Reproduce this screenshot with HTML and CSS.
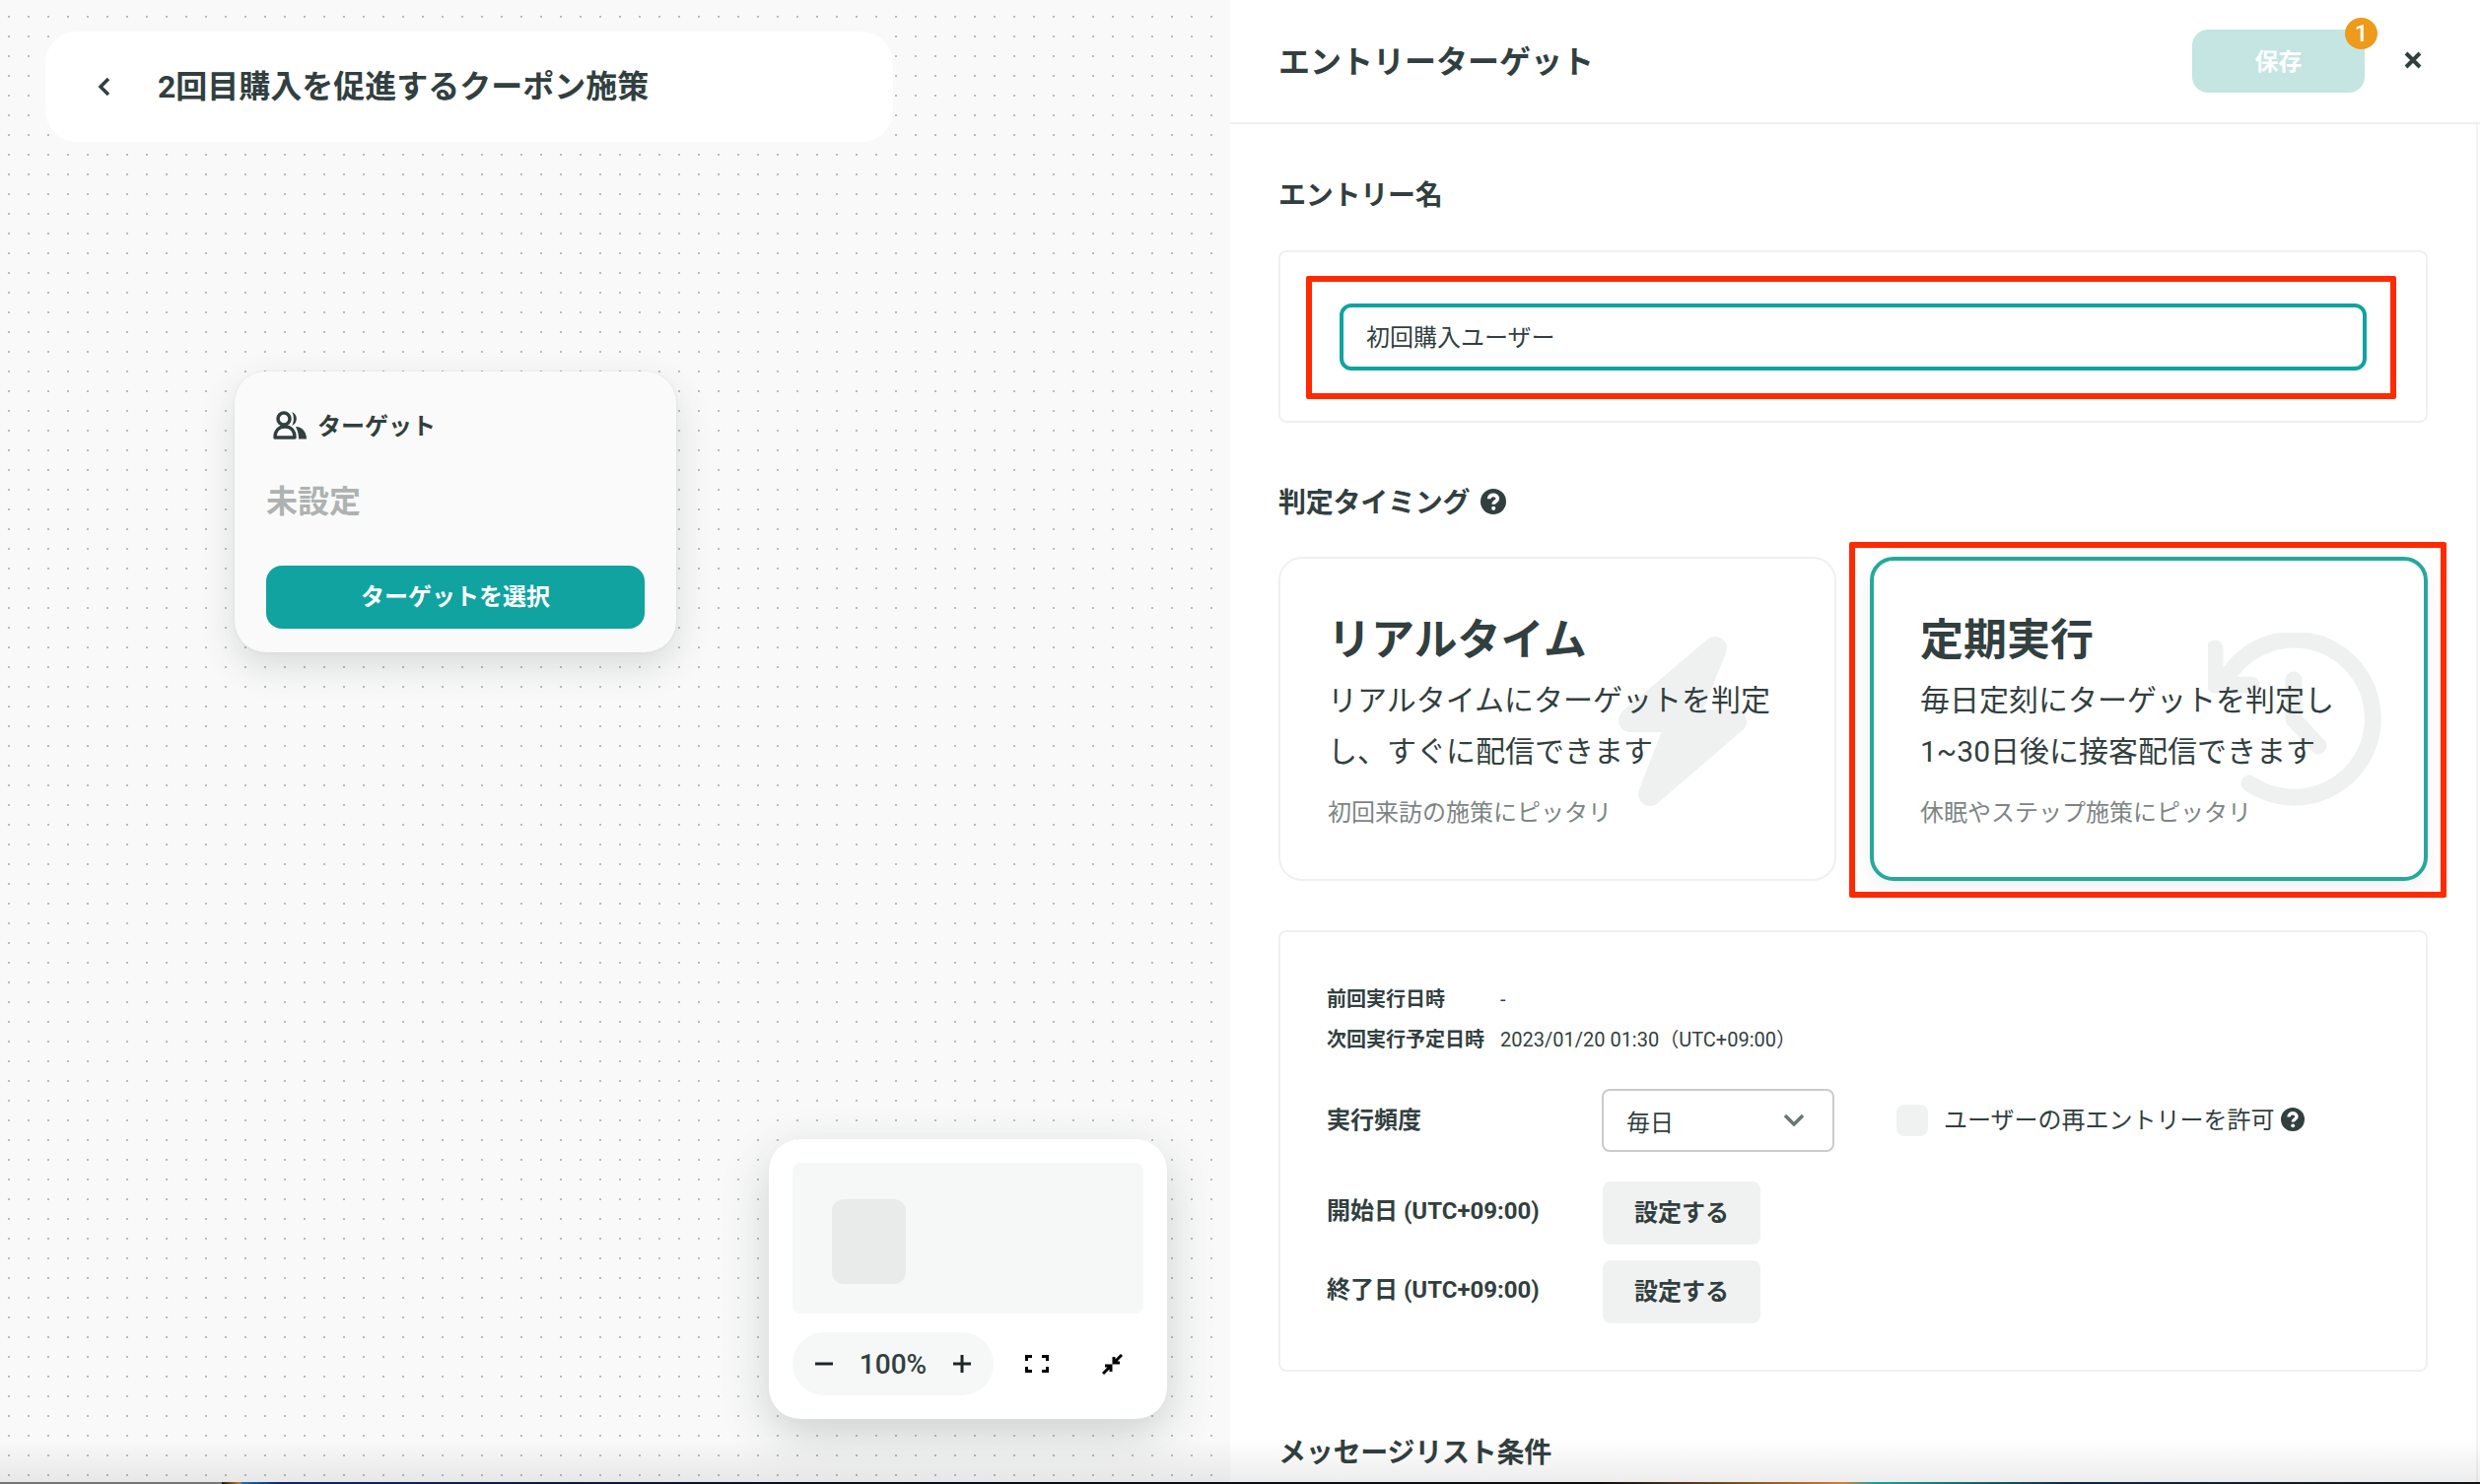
FILE: index.html
```html
<!DOCTYPE html>
<html lang="ja">
<head>
    <meta charset="UTF-8">
    <meta name="viewport" content="width=device-width, initial-scale=1.0">
    <title>エントリーターゲット</title>
    <link rel="stylesheet" href="styles.css">
</head>
<body>
    <div class="app">
        <main class="canvas">
            <div class="campaign">
                <svg class="back_icon" viewBox="0 0 14 22"><polyline points="11,3 3,11 11,19"/></svg>
                <h1 class="campaign_name">2回目購入を促進するクーポン施策</h1>
            </div>

            <div class="node">
                <div class="node_title">
                    <svg class="node_icon" viewBox="0 0 36 30">
                        <circle class="line" cx="12" cy="8" r="6"/>
                        <path class="line" d="M3 27C3 20 7 16 13 16C19 16 23 20 23 27Z"/>
                        <path class="solid" d="M20 1A7.5 7.5 0 0 1 20 15C22.5 12 22.5 4 20 1Z"/>
                        <path class="solid" d="M24 16C31 16 35 22 35 28.5H27C27 24 26 20 24 16Z"/>
                    </svg>
                    <span>ターゲット</span>
                </div>
                <div class="node_value">未設定</div>
                <button class="node_btn">ターゲットを選択</button>
            </div>

            <div class="zoombox">
                <div class="minimap"><div class="minimap_node"></div></div>
                <div class="zoom_row">
                    <div class="zoom_pill">
                        <svg class="zoom_sign" viewBox="0 0 18 18"><path d="M0 9H18"/></svg>
                        <span class="zoom_value">100%</span>
                        <svg class="zoom_sign" viewBox="0 0 18 18"><path d="M0 9H18M9 0V18"/></svg>
                    </div>
                    <svg class="fit_icon" viewBox="0 0 24 18"><path d="M7 1.5H1.5V6M17 1.5H22.5V6M7 16.5H1.5V12M17 16.5H22.5V12"/></svg>
                    <svg class="shrink_icon" viewBox="0 0 21 21"><path d="M20 1L13 8M12 3V9H18M1 20L8 13M3 12H9V18"/></svg>
                </div>
            </div>
        </main>

        <aside class="panel">
            <header class="panel_head">
                <h2 class="panel_title">エントリーターゲット</h2>
                <div class="panel_actions">
                    <button class="save_btn">保存<span class="badge">1</span></button>
                    <svg class="close_icon" viewBox="0 0 18 18"><path d="M2 2L16 16M16 2L2 16"/></svg>
                </div>
            </header>

            <div class="panel_body">
                <h3 class="section_title">エントリー名</h3>
                <div class="box name_box">
                    <div class="name_input">初回購入ユーザー</div>
                    <div class="mark mark_name"></div>
                </div>

                <h3 class="section_title timing_title">
                    <span>判定タイミング</span>
                    <svg class="help_icon" viewBox="0 0 24 24"><circle cx="12" cy="12" r="12"/><path d="M8 9.5C8 7 10 5.8 12 5.8C14.2 5.8 16 7.2 16 9.2C16 12 12.2 11.8 12.2 14.6"/><circle class="help_dot" cx="12.2" cy="18.3" r="1.9"/></svg>
                </h3>
                <div class="timing_grid">
                    <div class="timing_card">
                        <svg class="timing_bg" viewBox="0 0 132 175"><path d="M100 15L14 88H63L34 163L120 89H70Z"/></svg>
                        <div class="timing_name">リアルタイム</div>
                        <p class="timing_desc">リアルタイムにターゲットを判定<br>し、すぐに配信できます</p>
                        <p class="timing_note">初回来訪の施策にピッタリ</p>
                    </div>
                    <div class="timing_card selected">
                        <svg class="timing_bg clock" viewBox="0 0 178 178"><path d="M42 153A80 80 0 1 0 15 53M7 16V53H44M87 48V88L112 115"/></svg>
                        <div class="timing_name">定期実行</div>
                        <p class="timing_desc">毎日定刻にターゲットを判定し<br>1~30日後に接客配信できます</p>
                        <p class="timing_note">休眠やステップ施策にピッタリ</p>
                        <div class="mark mark_timing"></div>
                    </div>
                </div>

                <div class="box schedule_box">
                    <div class="run_row"><span class="run_label">前回実行日時</span><span>-</span></div>
                    <div class="run_row"><span class="run_label">次回実行予定日時</span><span>2023/01/20 01:30（UTC+09:00）</span></div>

                    <div class="form_row freq_row">
                        <span class="form_label">実行頻度</span>
                        <div class="select">
                            <span>毎日</span>
                            <svg class="select_arrow" viewBox="0 0 22 13"><polyline points="2,2 11,11 20,2"/></svg>
                        </div>
                        <span class="checkbox"></span>
                        <span class="check_label">ユーザーの再エントリーを許可</span>
                        <svg class="help_icon small" viewBox="0 0 24 24"><circle cx="12" cy="12" r="12"/><path d="M8 9.5C8 7 10 5.8 12 5.8C14.2 5.8 16 7.2 16 9.2C16 12 12.2 11.8 12.2 14.6"/><circle class="help_dot" cx="12.2" cy="18.3" r="1.9"/></svg>
                    </div>
                    <div class="form_row">
                        <span class="form_label date_label">開始日 (UTC+09:00)</span>
                        <button class="set_btn">設定する</button>
                    </div>
                    <div class="form_row">
                        <span class="form_label date_label">終了日 (UTC+09:00)</span>
                        <button class="set_btn">設定する</button>
                    </div>
                </div>

                <h3 class="section_title list_title">メッセージリスト条件</h3>
            </div>
        </aside>
        <div class="bottom_fade"></div>
    </div>
    <div class="desktop_strip"></div>
</body>
</html>
```

FILE: styles.css
```css
* {
    padding: 0;
    margin: 0;
    box-sizing: border-box;
}
body {
    height: 1506px;
    overflow: hidden;
    background: #fff;
    color: #323f3f;
    font-family: Roboto, 'Noto Sans CJK JP', sans-serif;
}
button {
    border: none;
    font-family: inherit;
}
svg {
    display: block;
    flex-shrink: 0;
}
.app {
    position: relative;
    display: flex;
    height: 1504px;
    overflow: hidden;
}

/* left canvas */
.canvas {
    position: relative;
    width: 1248px;
    background-color: #f9f9f9;
    background-image: radial-gradient(circle, #b9bcbb 1px, transparent 1.3px);
    background-size: 20px 20px;
    background-position: -1px 7px;
}
.campaign {
    position: absolute;
    left: 46px;
    top: 32px;
    width: 860px;
    height: 112px;
    display: flex;
    align-items: center;
    padding-left: 53px;
    background: #fff;
    border-radius: 32px;
}
.back_icon {
    width: 14px;
    height: 22px;
    margin-right: 47px;
    fill: none;
    stroke: #323f3f;
    stroke-width: 3.5;
}
.campaign_name {
    padding-bottom: 6px;
    font-size: 32px;
    font-weight: 700;
}
.node {
    position: absolute;
    left: 238px;
    top: 377px;
    width: 448px;
    height: 285px;
    padding: 35px 32px 24px;
    background: #fafafa;
    border-radius: 32px;
    box-shadow: 0 14px 36px rgba(50, 63, 63, 0.16), 0 0 3px rgba(50, 63, 63, 0.08);
}
.node_title {
    display: flex;
    align-items: center;
    gap: 10px;
    height: 40px;
    padding-left: 6px;
    font-size: 24px;
    font-weight: 700;
}
.node_title span {
    padding-bottom: 3px;
}
.node_icon {
    width: 36px;
    height: 30px;
}
.node_icon .line {
    fill: none;
    stroke: #323f3f;
    stroke-width: 3.5;
    stroke-linejoin: round;
}
.node_icon .solid {
    fill: #323f3f;
}
.node_value {
    margin-top: 33px;
    font-size: 32px;
    line-height: 48px;
    font-weight: 700;
    color: #aeb2b1;
}
.node_btn {
    display: block;
    width: 100%;
    height: 64px;
    margin-top: 41px;
    padding-bottom: 5px;
    background: #10a3a0;
    color: #fff;
    font-size: 24px;
    font-weight: 700;
    border-radius: 16px;
}
.zoombox {
    position: absolute;
    left: 780px;
    top: 1156px;
    width: 404px;
    height: 284px;
    padding: 24px;
    background: #fff;
    border-radius: 32px;
    box-shadow: 0 16px 48px rgba(50, 63, 63, 0.22);
}
.minimap {
    height: 153px;
    padding: 37px 0 0 40px;
    background: #f6f8f7;
    border-radius: 8px;
}
.minimap_node {
    width: 75px;
    height: 86px;
    background: #e9ebea;
    border-radius: 12px;
}
.zoom_row {
    display: flex;
    align-items: center;
    margin-top: 19px;
}
.zoom_pill {
    display: flex;
    align-items: center;
    justify-content: space-between;
    width: 204px;
    height: 64px;
    padding: 0 23px;
    background: #f6f8f7;
    border-radius: 32px;
}
.zoom_sign {
    width: 18px;
    height: 18px;
    fill: none;
    stroke: #1c2626;
    stroke-width: 3;
}
.zoom_value {
    font-size: 28px;
    font-weight: 500;
}
.fit_icon {
    width: 24px;
    height: 18px;
    margin-left: 32px;
    fill: none;
    stroke: #000;
    stroke-width: 3;
}
.shrink_icon {
    width: 21px;
    height: 21px;
    margin-left: 54px;
    fill: none;
    stroke: #000;
    stroke-width: 3;
}

/* right panel */
.panel {
    flex: 1;
    min-width: 0;
    background: #fff;
}
.panel_head {
    display: flex;
    align-items: center;
    justify-content: space-between;
    height: 126px;
    padding: 0 59px 0 49px;
    border-bottom: 2px solid #f0f0f0;
}
.panel_title {
    padding-bottom: 4px;
    font-size: 32px;
    font-weight: 700;
}
.panel_actions {
    display: flex;
    align-items: center;
    gap: 40px;
}
.save_btn {
    position: relative;
    width: 175px;
    height: 64px;
    padding-bottom: 4px;
    background: #c4e5e2;
    color: #fff;
    font-size: 24px;
    font-weight: 700;
    border-radius: 16px;
}
.badge {
    position: absolute;
    top: -12px;
    right: -13px;
    width: 33px;
    height: 32px;
    background: #ee9a1a;
    border-radius: 50%;
    font-size: 24px;
    font-weight: 500;
    line-height: 32px;
}
.close_icon {
    width: 18px;
    height: 18px;
    margin-bottom: 2px;
    fill: none;
    stroke: #323f3f;
    stroke-width: 4;
}
.panel_body {
    height: 1378px;
    margin-right: 2px;
    padding: 50px 49px 0;
    border-right: 2px solid #f3f3f3;
}
.section_title {
    display: flex;
    align-items: center;
    gap: 11px;
    height: 40px;
    font-size: 28px;
    font-weight: 700;
    letter-spacing: -0.25px;
}
.box {
    position: relative;
    border: 2px solid #f0f0f0;
    border-radius: 8px;
}
.name_box {
    height: 175px;
    margin-top: 38px;
    padding: 52px 60px 0;
}
.name_input {
    height: 68px;
    padding-left: 23px;
    border: 4px solid #10a3a0;
    border-radius: 12px;
    font-size: 24px;
    line-height: 62px;
}
.mark {
    position: absolute;
    border: 6px solid #ff2a00;
    border-radius: 2px;
    pointer-events: none;
}
.mark_name {
    left: 26px;
    top: 24px;
    right: 30px;
    bottom: 22px;
}
.mark_timing {
    left: -25px;
    top: -19px;
    right: -23px;
    bottom: -21px;
}
.timing_title {
    margin-top: 60px;
}
.timing_title span {
    padding-bottom: 2px;
}
.help_icon {
    width: 26px;
    height: 26px;
    fill: #323f3f;
}
.help_icon path {
    fill: none;
    stroke: #fff;
    stroke-width: 3.4;
}
.help_icon .help_dot {
    fill: #fff;
}
.help_icon.small {
    width: 24px;
    height: 24px;
    margin-left: 6px;
    margin-bottom: 3px;
}
.timing_grid {
    display: grid;
    grid-template-columns: 1fr 1fr;
    gap: 34px;
    margin-top: 36px;
}
.timing_card {
    position: relative;
    height: 329px;
    padding: 55px 30px 0 48px;
    border: 2px solid #f0f0f0;
    border-radius: 24px;
}
.timing_card.selected {
    padding: 53px 30px 0 47px;
    border: 4px solid #27a89c;
    box-shadow: 0 8px 24px rgba(0, 0, 0, 0.06);
}
.timing_bg {
    position: absolute;
    left: 341px;
    top: 76px;
    width: 132px;
    height: 175px;
    fill: #eff1f0;
    stroke: #eff1f0;
    stroke-width: 24;
    stroke-linejoin: round;
}
.timing_bg.clock {
    left: 339px;
    top: 73px;
    width: 178px;
    height: 178px;
    fill: none;
    stroke-width: 17;
    stroke-linecap: round;
}
.timing_name,
.timing_desc,
.timing_note {
    position: relative;
}
.timing_name {
    font-size: 44px;
    line-height: 56px;
    font-weight: 700;
}
.timing_desc {
    margin-top: 7px;
    font-size: 30px;
    line-height: 52px;
}
.timing_note {
    margin-top: 18px;
    font-size: 24px;
    line-height: 36px;
    color: #7d8584;
}
.schedule_box {
    height: 448px;
    margin-top: 50px;
    padding: 48px 47px 0;
}
.run_row {
    display: flex;
    font-size: 20px;
    line-height: 41px;
}
.run_label {
    width: 176px;
    font-weight: 700;
}
.form_row {
    display: flex;
    align-items: center;
    margin-top: 16px;
}
.freq_row {
    margin-top: 29px;
    margin-bottom: 30px;
}
.form_label {
    width: 280px;
    padding-bottom: 6px;
    font-size: 24px;
    font-weight: 700;
}
.form_label.date_label {
    padding-bottom: 9px;
}
.select {
    display: flex;
    align-items: center;
    justify-content: space-between;
    width: 236px;
    height: 64px;
    margin-left: -1px;
    padding: 0 28px 0 23px;
    border: 2px solid #c9cccb;
    border-radius: 8px;
    font-size: 24px;
}
.select_arrow {
    width: 22px;
    height: 13px;
    margin-bottom: 2px;
    fill: none;
    stroke: #6b7574;
    stroke-width: 3.5;
}
.checkbox {
    width: 32px;
    height: 32px;
    margin-left: 63px;
    background: #f0f2f1;
    border-radius: 8px;
}
.check_label {
    margin-left: 16px;
    padding-bottom: 5px;
    font-size: 24px;
}
.set_btn {
    width: 160px;
    height: 64px;
    padding-bottom: 6px;
    background: #f0f2f1;
    color: #323f3f;
    font-size: 24px;
    font-weight: 700;
    border-radius: 8px;
}
.list_title {
    margin-top: 60px;
}
.bottom_fade {
    position: absolute;
    left: 0;
    right: 0;
    bottom: 0;
    height: 44px;
    background: linear-gradient(rgba(0, 0, 0, 0), rgba(0, 0, 0, 0.07));
    pointer-events: none;
}
.desktop_strip {
    height: 2px;
    background: linear-gradient(90deg, #777 0, #777 225px, #1a1a1a 225px, #c77a2a 243px, #1c6fa8 246px, #0a2a6a 283px, #0a0f24 800px, #0c0c0c 1620px, #d08030 1870px, #20a0a0 1900px, #0a2a4a 2100px, #111 2516px);
}
```
